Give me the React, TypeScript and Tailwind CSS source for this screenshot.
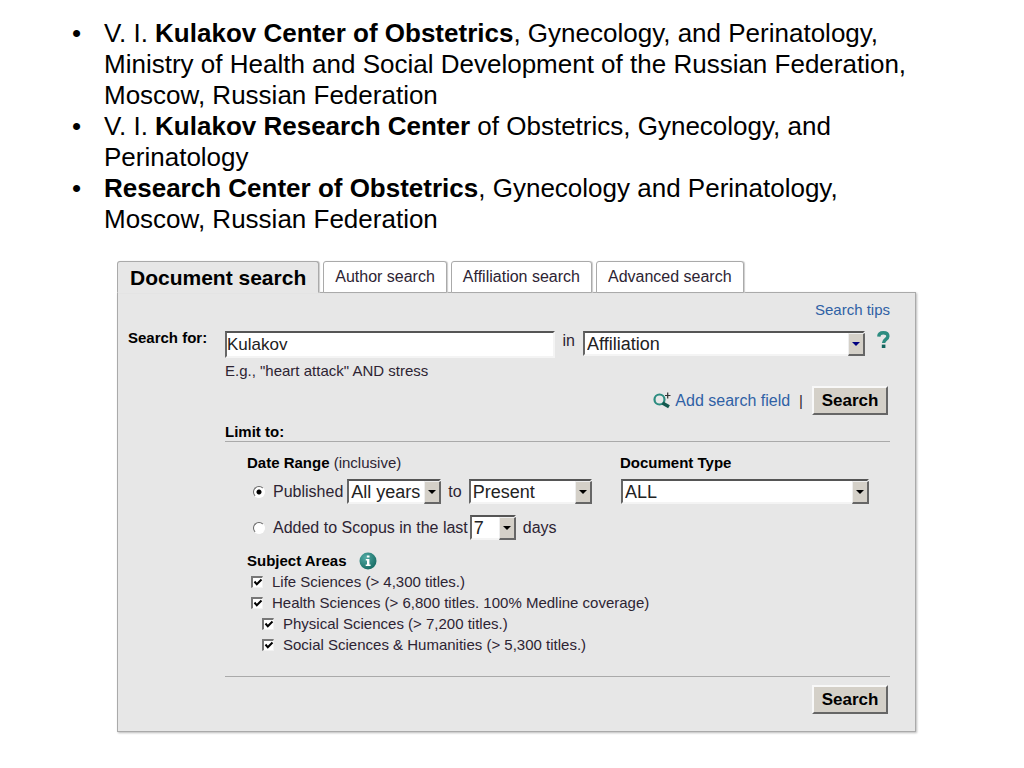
import { useState } from "react";
import type { ReactNode } from "react";
import clsx from "clsx";

const TABS = ["Document search", "Author search", "Affiliation search", "Advanced search"];

const SUBJECTS = [
  { id: "life", label: "Life Sciences (> 4,300 titles.)", indent: false },
  { id: "health", label: "Health Sciences (> 6,800 titles. 100% Medline coverage)", indent: false },
  { id: "physical", label: "Physical Sciences (> 7,200 titles.)", indent: true },
  { id: "social", label: "Social Sciences & Humanities (> 5,300 titles.)", indent: true },
];

interface DropDownProps {
  label: string;
  options: string[];
  className: string;
  arrowClassName?: string;
}

function DropDown({ label, options, className, arrowClassName = "text-black" }: DropDownProps) {
  return (
    <div className={clsx("relative h-[25px] shrink-0", className)}>
      <select
        aria-label={label}
        className="block w-full h-full appearance-none rounded-none bg-white border-2 border-t-[#555] border-l-[#666] border-r-[#f4f4f4] border-b-[#f4f4f4] pl-[2px] pr-4 text-[18px] leading-5 text-[#222]"
      >
        {options.map((option) => (
          <option key={option}>{option}</option>
        ))}
      </select>
      <span
        className={clsx(
          "pointer-events-none absolute top-[2px] right-0 bottom-0 w-[17px] flex items-center justify-center bg-[#d4d0c8] border border-t-[#eee] border-l-[#eee] border-r-2 border-b-2 border-r-[#666] border-b-[#666]",
          arrowClassName
        )}
      >
        <svg width="8" height="4" viewBox="0 0 8 4" fill="currentColor">
          <path d="M0 0h8L4 4z" />
        </svg>
      </span>
    </div>
  );
}

function SearchButton() {
  return (
    <button
      type="submit"
      className="w-[76px] h-[29px] mr-[2px] bg-[#d4d0c8] border-2 border-t-[#f8f8f8] border-l-[#f8f8f8] border-r-[#666] border-b-[#666] text-[17px] leading-5 font-bold text-black"
    >
      Search
    </button>
  );
}

function RadioOption({ id, defaultChecked, children }: { id: string; defaultChecked?: boolean; children: ReactNode }) {
  return (
    <>
      <input
        type="radio"
        name="range"
        id={id}
        defaultChecked={defaultChecked}
        className="ml-[6px] size-[12px] shrink-0 appearance-none rounded-full bg-white border border-t-[#666] border-l-[#666] border-r-white border-b-white checked:bg-[radial-gradient(circle,#000_2px,#fff_3px)]"
      />
      <label htmlFor={id} className="ml-2">
        {children}
      </label>
    </>
  );
}

function CheckOption({ id, label, indent }: { id: string; label: string; indent: boolean }) {
  return (
    <div className={clsx("flex items-center h-[21px] text-[15px]", indent ? "pl-[15px]" : "pl-1")}>
      <span className="relative size-[12px]">
        <input
          type="checkbox"
          id={id}
          defaultChecked
          className="peer block size-[12px] appearance-none bg-white border-t-2 border-l-2 border-r border-b border-t-[#777] border-l-[#777] border-r-[#f2f2f2] border-b-[#f2f2f2]"
        />
        <svg
          viewBox="0 0 12 12"
          className="pointer-events-none absolute inset-0 hidden peer-checked:block"
          fill="none"
          stroke="#000"
          strokeWidth="2"
        >
          <path d="M3.500 5.500l2.300 2.800L10.500 3.500" />
        </svg>
      </span>
      <label htmlFor={id} className="ml-[9px]">
        {label}
      </label>
    </div>
  );
}

function Tabs() {
  const [active, setActive] = useState(TABS[0]);

  return (
    <div role="tablist" className="flex gap-1 -mb-px relative">
      {TABS.map((tab) => (
        <button
          key={tab}
          role="tab"
          aria-selected={tab === active}
          onClick={() => setActive(tab)}
          className={clsx(
            "h-8 border border-[#aaa] rounded-t-[3px] whitespace-nowrap shadow-[1px_0_1px_#ccc]",
            tab === active
              ? "bg-[#e7e7e7] border-b-[#e7e7e7] px-3 text-[21px] font-bold text-black"
              : "bg-white px-[11px] text-[16px] text-[#2d2433]"
          )}
        >
          {tab}
        </button>
      ))}
    </div>
  );
}

function SearchForm() {
  return (
    <form
      onSubmit={(e) => e.preventDefault()}
      className="bg-[#e7e7e7] border border-[#aaa] shadow-[1px_1px_2px_#bbb] pt-[7px] pr-[25px] pb-[17px] pl-[10px] text-[15px] leading-5 text-[#2d2433]"
    >
      <div className="text-right">
        <a href="#tips" className="text-[#2f61a5]">Search tips</a>
      </div>

      <div className="flex mt-2">
        <label htmlFor="query" className="w-[97px] shrink-0 font-bold text-black">
          Search for:
        </label>

        <div className="flex-1 min-w-0 pt-[3px]">
          <div className="flex items-start">
            <input
              id="query"
              type="text"
              defaultValue="Kulakov"
              className="flex-1 min-w-0 h-[27px] bg-white border-2 border-t-[#555] border-l-[#666] border-r-[#f4f4f4] border-b-[#f4f4f4] text-[17px] text-[#222]"
            />
            <span className="px-2 text-[16px]">in</span>
            <DropDown
              label="Search in"
              options={["Affiliation", "Article Title", "Authors"]}
              className="w-[282px]"
              arrowClassName="text-[#000080]"
            />
            <a href="#help" aria-label="Help" className="ml-3">
              <svg width="13" height="18" viewBox="0 0 13 18" fill="none">
                <path d="M1.800 5.600C1.900 2.900 3.700 1.700 6.300 1.700c2.800 0 4.600 1.200 4.600 3.500 0 3.200-4.300 3-4.300 6.700" stroke="#2c8c80" strokeWidth="3.400" />
                <path d="M4.800 13.600h3.600v3.400H4.800z" fill="#14665f" />
              </svg>
            </a>
          </div>

          <p className="mt-[3px]">E.g., "heart attack" AND stress</p>

          <div className="flex items-center justify-end mt-[5px]">
            <a href="#add" className="flex items-center text-[16px] text-[#2f61a5]">
              <svg width="18" height="17" viewBox="0 0 18 17" fill="none" className="mr-1">
                <circle cx="6.500" cy="7.500" r="5" stroke="#2c8c80" strokeWidth="2.200" />
                <path d="M9.500 11l6.500 3.800" stroke="#14594f" strokeWidth="3.400" />
                <path d="M12 3.500h5.500M14.700 0.500v6" stroke="#333" strokeWidth="1.200" />
              </svg>
              Add search field
            </a>
            <span className="mx-[9px]">|</span>
            <SearchButton />
          </div>

          <h2 className="mt-[7px] leading-[19px] font-bold text-black border-b border-[#aaa]">Limit to:</h2>

          <div className="pl-[22px]">
            <div className="grid grid-cols-[373px_1fr] mt-[11px]">
              <div>
                <p>
                  <b className="text-black">Date Range</b> (inclusive)
                </p>
                <div className="flex items-center mt-[6px] text-[16px]">
                  <RadioOption id="published" defaultChecked>Published</RadioOption>
                  <DropDown label="From year" options={["All years", "2010", "2009"]} className="w-[94px] ml-1" />
                  <span className="mx-[7px]">to</span>
                  <DropDown label="To year" options={["Present", "2010", "2009"]} className="w-[123px]" />
                </div>
                <div className="flex items-center mt-[11px] text-[16px] whitespace-nowrap">
                  <RadioOption id="added">Added to Scopus in the last</RadioOption>
                  <DropDown label="Number of days" options={["7", "14", "30"]} className="w-[46px] ml-[2px]" />
                  <span className="ml-[7px]">days</span>
                </div>
              </div>

              <div>
                <p className="font-bold text-black">Document Type</p>
                <DropDown label="Document Type" options={["ALL", "Article", "Review"]} className="mt-[6px] ml-px mr-[21px]" />
              </div>
            </div>

            <fieldset className="mt-[11px]">
              <legend className="flex items-center font-bold text-black">
                Subject Areas
                <svg width="18" height="18" viewBox="0 0 18 18" className="ml-3">
                  <defs>
                    <radialGradient id="infoFill" cx="0.35" cy="0.3" r="0.8">
                      <stop offset="0" stopColor="#52aaa4" />
                      <stop offset="1" stopColor="#12675f" />
                    </radialGradient>
                  </defs>
                  <circle cx="9" cy="9" r="8.500" fill="url(#infoFill)" />
                  <path d="M7.800 3.500h2.700v2H7.800zM6.800 7h3.600v5.500h1.200V14H6.700v-1.500H8v-4H6.800z" fill="#fff" />
                </svg>
              </legend>
              {SUBJECTS.map((subject) => (
                <CheckOption key={subject.id} {...subject} />
              ))}
            </fieldset>
          </div>

          <div className="flex justify-end mt-[21px] pt-2 border-t border-[#aaa]">
            <SearchButton />
          </div>
        </div>
      </div>
    </form>
  );
}

export default function App() {
  return (
    <main className="bg-white pt-[18px] pb-9 font-['Liberation_Sans',Arial,sans-serif] text-black">
      <ul className="list-none pl-[72px] pr-[108px] text-[26px] leading-[31px]">
        <li className="flex">
          <span className="w-8 shrink-0">•</span>
          <p>
            V. I. <b>Kulakov Center of Obstetrics</b>, Gynecology, and Perinatology, Ministry of Health and Social
            Development of the Russian Federation, Moscow, Russian Federation
          </p>
        </li>
        <li className="flex">
          <span className="w-8 shrink-0">•</span>
          <p>
            V. I. <b>Kulakov Research Center</b> of Obstetrics, Gynecology, and Perinatology
          </p>
        </li>
        <li className="flex">
          <span className="w-8 shrink-0">•</span>
          <p>
            <b>Research Center of Obstetrics</b>, Gynecology and Perinatology, Moscow, Russian Federation
          </p>
        </li>
      </ul>

      <section className="mt-[26px] ml-[117px] mr-[108px]">
        <Tabs />
        <SearchForm />
      </section>
    </main>
  );
}
